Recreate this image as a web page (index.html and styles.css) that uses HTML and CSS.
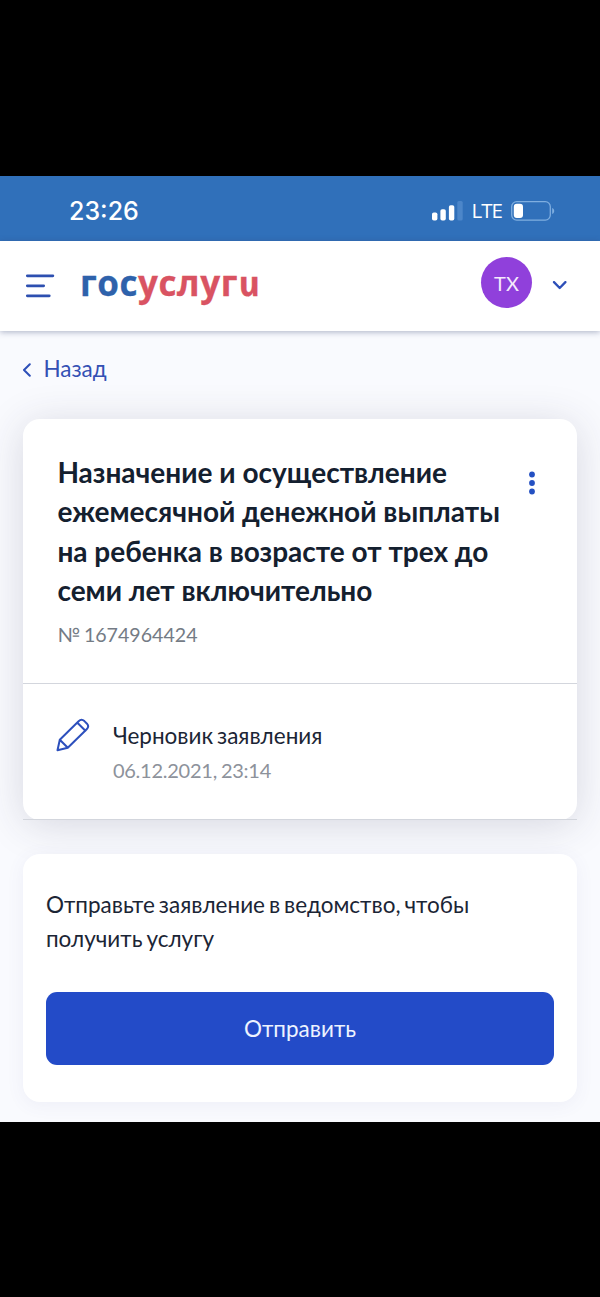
FILE: index.html
```html
<!DOCTYPE html>
<html lang="ru">
<head>
<meta charset="utf-8">
<title>Госуслуги</title>
<link rel="stylesheet" href="styles.css">
</head>
<body>
<div class="screen">
  <div class="status">
    <span class="clock">23:26</span>
    <div class="indicators">
      <svg class="signal" width="31" height="20" viewBox="0 0 31 20">
        <rect x="0" y="11.5" width="5.4" height="8" rx="1.8" fill="#fff"/>
        <rect x="8.4" y="8.3" width="5.4" height="11.2" rx="1.8" fill="#fff"/>
        <rect x="16.9" y="4.3" width="5.4" height="15.2" rx="1.8" fill="#fff"/>
        <rect x="25.3" y="0" width="5.4" height="19.5" rx="1.5" fill="#4c86c9"/>
      </svg>
      <span class="network">LTE</span>
      <svg class="battery" width="44" height="20" viewBox="0 0 44 20">
        <rect x=".7" y=".7" width="38.6" height="18.4" rx="5" fill="none" stroke="#7faee0" stroke-width="1.3"/>
        <rect x="2.8" y="2.8" width="9.2" height="14.2" rx="3" fill="#fff"/>
        <path d="M41.2 7v6c1.4-.6 2-1.7 2-3s-.6-2.400-2-3z" fill="#7faee0"/>
      </svg>
    </div>
  </div>
  <header class="header">
    <svg class="menu" width="30" height="24" viewBox="0 0 30 24" fill="none" stroke="#2d4fb0" stroke-width="2.700" stroke-linecap="round">
      <path d="M2.300 1.800h25.600M2.300 11.800h16.400M2.300 21.800h22"/>
    </svg>
    <div class="logo"><span class="logo-blue">гос</span><span class="logo-red">услуг<span class="logo-last">и</span></span></div>
    <div class="avatar">ТХ</div>
    <svg class="chevron" width="16" height="10" viewBox="0 0 16 10" fill="none" stroke="#2d4fb8" stroke-width="2.300" stroke-linecap="round" stroke-linejoin="round"><path d="M2 1.100l5.700 5.900 5.700-5.900"/></svg>
  </header>
  <main class="main">
    <a class="back"><svg width="10" height="14" viewBox="0 0 10 14" fill="none" stroke="#2d4fb8" stroke-width="2" stroke-linecap="round" stroke-linejoin="round"><path d="M7.800 1.200L2 7l5.800 5.800"/></svg><span>Назад</span></a>
    <section class="card order">
      <div class="order-head">
        <div>
          <h1 class="title">Назначение и осуществление<br>ежемесячной денежной выплаты<br>на ребенка в возрасте от трех до<br>семи лет включительно</h1>
          <div class="number">№ 1674964424</div>
        </div>
        <svg class="dots" width="8" height="24" viewBox="0 0 8 24" fill="#2450c2"><circle cx="4" cy="3.500" r="2.900"/><circle cx="4" cy="12" r="2.900"/><circle cx="4" cy="20.500" r="2.900"/></svg>
      </div>
      <div class="order-state">
        <svg class="pencil" width="34" height="34" viewBox="0 0 34 34" fill="none" stroke="#2d50bd" stroke-width="2" stroke-linejoin="round" stroke-linecap="round">
          <path d="M1.500 32.300L3.800 21.800 22.600 3.200Q25.500.4 28.400 3.100L31 5.700Q33.500 8.500 30.700 11.300L11.800 29.800zM3.800 21.800l8 8M21.400 4.700l8 8"/>
        </svg>
        <div>
          <div class="state">Черновик заявления</div>
          <div class="date">06.12.2021, 23:14</div>
        </div>
      </div>
    </section>
    <section class="card submit">
      <p class="hint">Отправьте заявление в ведомство, чтобы<br>получить услугу</p>
      <button class="button">Отправить</button>
    </section>
  </main>
</div>
</body>
</html>
```
FILE: styles.css
```css
* { box-sizing: border-box; }
body {
  margin: 0;
  min-height: 1297px;
  padding: 176px 0;
  background: #000;
  font-family: Lato, "Open Sans", sans-serif;
  color: #1b2535;
}
.screen { height: 945.5px; overflow: hidden; background: #f9fafe; }
.status {
  height: 64.5px;
  padding: 5px 45px 0 69px;
  display: flex;
  align-items: center;
  justify-content: space-between;
  background: #3070ba;
  color: #fff;
}
.clock { font: 500 25px/30px Inter, sans-serif; }
.indicators { display: flex; align-items: center; }
.network { margin: -2px 9px 0 9px; font: 500 20.5px/24px "Open Sans", sans-serif; letter-spacing: -1px; }
.header {
  position: relative;
  height: 90px;
  padding: 0 32px 0 25px;
  display: flex;
  align-items: center;
  background: #fff;
  box-shadow: 0 1px 6px rgba(50, 65, 110, .4);
}
.logo { margin: -6px 0 0 25px; font: 700 35px/40px "Open Sans", sans-serif; letter-spacing: .55px; -webkit-text-stroke: .3px; }
.logo-blue { color: #2e62ab; }
.logo-red { color: #d95362; }
.logo-last { display: inline-block; font-style: italic; transform: skewX(12deg); }
.avatar {
  width: 51px;
  height: 51px;
  margin: -6px 20px 0 auto;
  border-radius: 50%;
  background: #9040db;
  color: #f5eafc;
  font-size: 20px;
  line-height: 52px;
  text-align: center;
}
.main { padding: 22px 23.4px 0; }
.back { display: flex; align-items: center; gap: 11px; height: 34px; color: #3450b4; font-size: 22.5px; line-height: 32px; }
.back svg { margin-left: -1px; }
.back span { margin-top: -1px; }
.card { border-radius: 17px; background: #fff; }
.order { margin-top: 32.5px; height: 401px; box-shadow: 0 5px 40px rgba(45, 50, 75, .17); }
.order-head { height: 265px; padding: 34px 41px 0 34px; display: flex; justify-content: space-between; border-bottom: 1.5px solid #d3d6dd; }
.title { margin: 0; color: #14202f; font-size: 28px; font-weight: 700; line-height: 39.3px; white-space: nowrap; }
.number { margin-top: 9.5px; color: #747b85; font-size: 19.600px; line-height: 30px; word-spacing: -1.2px; }
.dots { margin-top: 18px; flex: none; }
.order-state { height: 136px; padding: 34px 34px 0 33px; display: flex; gap: 22.5px; border-bottom: 1.5px solid #d3d6dd; }
.state { font-size: 22.5px; line-height: 35px; word-spacing: -1.8px; }
.date { margin-top: 2px; color: #8d929b; font-size: 20px; line-height: 31px; letter-spacing: -.25px; word-spacing: -.9px; }
.submit { position: relative; margin-top: 34px; height: 248px; padding: 34px 22.5px 0; box-shadow: 0 3px 18px rgba(80, 85, 150, .07); }
.hint { margin: 0; font-size: 22.5px; line-height: 34px; word-spacing: -1.8px; }
.button {
  display: block;
  width: 100%;
  height: 73px;
  margin-top: 36px;
  border: 0;
  border-radius: 11px;
  background: #234bc8;
  color: #edf3ff;
  font: 400 22.5px/72px Lato, "Open Sans", sans-serif;
}
```
